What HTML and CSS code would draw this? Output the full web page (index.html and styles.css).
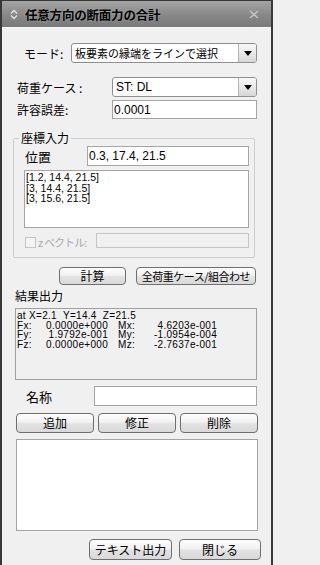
FILE: index.html
```html
<!DOCTYPE html>
<html lang="ja">
<head>
<meta charset="utf-8">
<title>任意方向の断面力の合計</title>
<link rel="stylesheet" href="styles.css">
</head>
<body>
<div class="window">
  <div class="titlebar">
    <svg class="t-icon" width="8" height="11" viewBox="0 0 8 11"><path d="M1 4.5 L4 1.5 L7 4.5 M1 6.5 L4 9.5 L7 6.5" fill="none" stroke="#e4e4e4" stroke-width="1.4"/></svg>
    <span class="t-text">任意方向の断面力の合計</span>
    <svg class="t-close" width="10" height="9" viewBox="0 0 10 9"><path d="M1 1 L9 8 M9 1 L1 8" fill="none" stroke="#c4c4c4" stroke-width="1.5"/></svg>
  </div>

  <div class="row row-mode">
    <span class="lbl lbl-mode">モード:</span>
    <div class="combo combo-mode">
      <span class="combo-text combo-text-small">板要素の縁端をラインで選択</span>
      <span class="combo-btn"><svg width="8" height="5" viewBox="0 0 8 5"><path d="M0 0 H8 L4 5 Z" fill="#000"/></svg></span>
    </div>
  </div>

  <div class="row row-load">
    <span class="lbl lbl-wide">荷重ケース :</span>
    <div class="combo combo-load">
      <span class="combo-text">ST: DL</span>
      <span class="combo-btn"><svg width="8" height="5" viewBox="0 0 8 5"><path d="M0 0 H8 L4 5 Z" fill="#000"/></svg></span>
    </div>
  </div>

  <div class="row row-tol">
    <span class="lbl lbl-wide">許容誤差:</span>
    <input class="field field-tol" type="text" value="0.0001">
  </div>

  <div class="group">
    <span class="legend">座標入力</span>
    <div class="row row-pos">
      <span class="lbl lbl-pos">位置</span>
      <input class="field field-pos" type="text" value="0.3, 17.4, 21.5">
    </div>
    <div class="coords">
      <div>[1.2, 14.4, 21.5]</div>
      <div>[3, 14.4, 21.5]</div>
      <div>[3, 15.6, 21.5]</div>
    </div>
    <div class="row row-vec">
      <span class="check"></span>
      <span class="lbl-disabled">z ベクトル:</span>
      <span class="field field-vec"></span>
    </div>
  </div>

  <div class="row row-calc">
    <button class="btn btn-calc">計算</button>
    <button class="btn btn-all">全荷重ケース/組合わせ</button>
  </div>

  <div class="section-label">結果出力</div>
  <div class="result">
    <div class="res-head">at X=2.1&nbsp; Y=14.4&nbsp; Z=21.5</div>
    <div class="res-row">
      <span class="c-lbl">Fx:</span><span class="c-num1">0.0000e+000</span><span class="c-mlbl">Mx:</span><span class="c-num2">4.6203e-001</span>
    </div>
    <div class="res-row">
      <span class="c-lbl">Fy:</span><span class="c-num1">1.9792e-001</span><span class="c-mlbl">My:</span><span class="c-num2">-1.0954e-004</span>
    </div>
    <div class="res-row">
      <span class="c-lbl">Fz:</span><span class="c-num1">0.0000e+000</span><span class="c-mlbl">Mz:</span><span class="c-num2">-2.7637e-001</span>
    </div>
  </div>

  <div class="row row-name">
    <span class="lbl lbl-name">名称</span>
    <input class="field field-name" type="text" value="">
  </div>

  <div class="row row-edit">
    <button class="btn btn-edit">追加</button>
    <button class="btn btn-edit">修正</button>
    <button class="btn btn-edit">削除</button>
  </div>

  <div class="listbox"></div>

  <div class="row row-bottom">
    <button class="btn btn-text">テキスト出力</button>
    <button class="btn btn-close">閉じる</button>
  </div>
</div>
</body>
</html>
```

FILE: styles.css
```css
* { box-sizing: border-box; }

html, body {
  margin: 0;
  padding: 0;
  background: #f0f0f0;
}

body {
  width: 273px;
  font-family: "Liberation Sans", "Noto Sans CJK JP", sans-serif;
  font-size: 12px;
  color: #000;
}

.window {
  width: 273px;
  height: 565px;
  border-left: 2px solid #383838;
  border-right: 2px solid #383838;
  background: #f0f0f0;
  overflow: hidden;
}

/* title bar */
.titlebar {
  height: 28px;
  border-top: 1px solid #383838;
  border-bottom: 1px solid #f8f8f8;
  background: linear-gradient(#a4a4a4, #858585 60%, #7a7a7a);
  display: flex;
  align-items: center;
  padding-left: 8px;
  padding-right: 12px;
}

.t-icon { flex: none; }

.t-text {
  margin-left: 7px;
  font-family: "Noto Sans CJK JP", sans-serif;
  font-weight: bold;
  font-size: 12.5px;
  letter-spacing: -0.2px;
  color: #000;
  text-shadow: 0 0 2px rgba(255, 255, 255, 0.35);
}

.t-close {
  flex: none;
  margin-left: auto;
}

/* generic rows */
.row {
  display: flex;
  align-items: center;
}

.lbl {
  flex: none;
  font-family: "Noto Sans CJK JP", sans-serif;
  font-size: 12px;
}

.row-mode { margin-top: 15px; height: 20px; }
.lbl-mode { margin-left: 22px; width: 47px; }

.row-load { margin-top: 14px; height: 20px; }
.row-tol { margin-top: 3px; height: 19px; }
.lbl-wide { margin-left: 15px; width: 95px; }

/* combo box */
.combo {
  display: flex;
  height: 20px;
  border: 1px solid #8f8f8f;
  border-radius: 3px;
  background: #fff;
  overflow: hidden;
}
.combo-mode { width: 186px; }
.combo-load { width: 145px; }

.combo-text {
  flex: 1;
  padding-left: 3px;
  line-height: 18px;
  font-size: 12px;
  white-space: nowrap;
  overflow: hidden;
}
.combo-text-small {
  font-family: "Noto Sans CJK JP", sans-serif;
  font-size: 11px;
}

.combo-btn {
  flex: none;
  width: 18px;
  border-left: 1px solid #b4b4b4;
  background: linear-gradient(#f7f7f7, #e9e9e9 50%, #d6d6d6);
  display: flex;
  align-items: center;
  justify-content: center;
}

/* text fields */
.field {
  display: block;
  border: 1px solid #a5a5a5;
  background: #fff;
  font-family: "Liberation Sans", "Noto Sans CJK JP", sans-serif;
  font-size: 12px;
  color: #000;
  padding: 0 0 0 1px;
  margin: 0;
  outline: none;
  border-radius: 0;
}
.field-tol { width: 145px; height: 19px; }

/* group box */
.group {
  position: relative;
  margin-top: 19px;
  margin-left: 11px;
  width: 242px;
  height: 120px;
  border: 1px solid #cdcdcd;
  border-radius: 2px;
  padding-top: 7px;
}

.legend {
  position: absolute;
  top: -8px;
  left: 5px;
  padding: 0 2px;
  line-height: 14px;
  background: #f0f0f0;
  font-family: "Noto Sans CJK JP", sans-serif;
  font-size: 12px;
}

.row-pos { height: 20px; }
.lbl-pos { margin-left: 11px; width: 62px; font-size: 13px; }
.field-pos { width: 162px; height: 20px; }

.coords {
  margin: 4px 0 0 10px;
  width: 225px;
  height: 58px;
  border: 1px solid #a5a5a5;
  background: #fff;
  padding: 1px 0 0 1px;
  font-size: 10.5px;
  line-height: 10.5px;
}

.row-vec {
  margin-top: 5px;
  height: 15px;
  align-items: flex-start;
}

.check {
  flex: none;
  margin: 4px 0 0 11px;
  width: 11px;
  height: 11px;
  border: 1px solid #c4c4c4;
  background: #f4f4f4;
}

.lbl-disabled {
  flex: none;
  width: 58px;
  margin-left: 2px;
  margin-top: 2px;
  font-family: "Noto Sans CJK JP", sans-serif;
  font-size: 11px;
  line-height: 14px;
  letter-spacing: -0.9px;
  white-space: nowrap;
  color: #a8a8a8;
}

.field-vec {
  width: 153px;
  height: 15px;
  background: #f0f0f0;
  border-color: #c4c4c4;
}

/* buttons */
.btn {
  flex: none;
  margin: 0;
  padding: 0;
  border: 1px solid #6f6f6f;
  border-radius: 4px;
  background: linear-gradient(#fdfdfd, #f1f1f1 45%, #e2e2e2 55%, #d9d9d9);
  font-family: "Noto Sans CJK JP", sans-serif;
  font-size: 12px;
  color: #000;
  line-height: 1;
  white-space: nowrap;
}

.row-calc { margin-top: 9px; height: 18px; }
.btn-calc { margin-left: 57px; width: 67px; height: 18px; }
.btn-all {
  margin-left: 10px;
  width: 120px;
  height: 18px;
  font-size: 11px;
  letter-spacing: -0.5px;
}

/* result */
.section-label {
  margin-top: 4px;
  margin-left: 13px;
  height: 14px;
  line-height: 14px;
  font-family: "Noto Sans CJK JP", sans-serif;
  font-size: 12px;
}

.result {
  margin-top: 5px;
  margin-left: 13px;
  width: 242px;
  height: 72px;
  border: 1px solid #a0a0a0;
  background: #f0f0f0;
  padding: 2px 0 0 1px;
  font-size: 10px;
  line-height: 9.5px;
  letter-spacing: 0.3px;
}

.res-row {
  display: flex;
  white-space: nowrap;
}
.c-lbl { flex: none; width: 16px; }
.c-num1 { flex: none; width: 75px; text-align: right; }
.c-mlbl { flex: none; width: 33px; padding-left: 10px; }
.c-num2 { flex: none; width: 76px; text-align: right; }

/* name row */
.row-name { margin-top: 6px; height: 20px; }
.lbl-name { margin-left: 24px; width: 68px; font-size: 13px; }
.field-name { width: 163px; height: 20px; }

.row-edit {
  margin-top: 7px;
  margin-left: 14px;
  height: 20px;
  gap: 4px;
}
.btn-edit { width: 78px; height: 20px; }

.listbox {
  margin-top: 6px;
  margin-left: 14px;
  width: 242px;
  height: 92px;
  border: 1px solid #a5a5a5;
  background: #fff;
}

.row-bottom {
  margin-top: 8px;
  margin-left: 87px;
  height: 21px;
  gap: 7px;
}
.btn-text { width: 83px; height: 21px; }
.btn-close { width: 82px; height: 21px; }
```
